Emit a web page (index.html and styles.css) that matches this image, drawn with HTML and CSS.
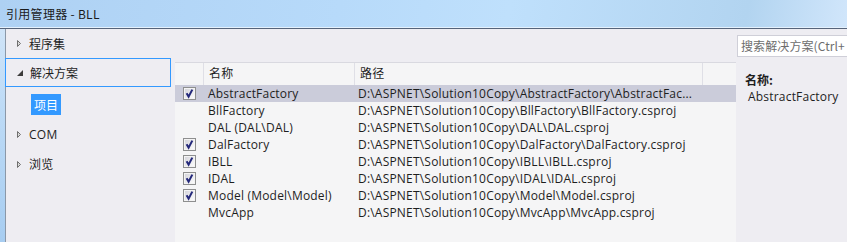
FILE: index.html
```html
<!DOCTYPE html>
<html lang="zh-CN">
<head>
    <meta charset="UTF-8">
    <title>引用管理器 - BLL</title>
    <link rel="stylesheet" href="styles.css">
</head>
<body>
    <div class="window">
        <div class="titlebar">引用管理器 - BLL</div>
        <div class="frame">
            <div class="frame-edge"></div>

            <!-- 左侧导航 -->
            <div class="nav">
                <div class="nav-item">
                    <svg class="arrow" width="6" height="9" viewBox="0 0 6 9"><path d="M1.5 1.5 L4.5 4.5 L1.5 7.5 Z" fill="#d8d8d8" stroke="#6f6f6f" stroke-width="1"/></svg>
                    <span>程序集</span>
                </div>
                <div class="nav-item selected">
                    <svg class="arrow" width="7" height="9" viewBox="0 0 7 9"><path d="M6 2 L6 8 L0 8 Z" fill="#3c3c3c"/></svg>
                    <span>解决方案</span>
                </div>
                <div class="nav-child"><span class="child-active">项目</span></div>
                <div class="nav-item tall">
                    <svg class="arrow" width="6" height="9" viewBox="0 0 6 9"><path d="M1.5 1.5 L4.5 4.5 L1.5 7.5 Z" fill="#d8d8d8" stroke="#6f6f6f" stroke-width="1"/></svg>
                    <span>COM</span>
                </div>
                <div class="nav-item tall">
                    <svg class="arrow" width="6" height="9" viewBox="0 0 6 9"><path d="M1.5 1.5 L4.5 4.5 L1.5 7.5 Z" fill="#d8d8d8" stroke="#6f6f6f" stroke-width="1"/></svg>
                    <span>浏览</span>
                </div>
            </div>

            <!-- 项目列表 -->
            <div class="list">
                <div class="list-head">
                    <div class="col-check"></div>
                    <div class="col-name">名称</div>
                    <div class="col-path">路径</div>
                    <div class="col-rest"></div>
                </div>
                <div class="rows" id="rows"></div>
            </div>

            <!-- 右侧 -->
            <div class="side">
                <div class="search">搜索解决方案(Ctrl+</div>
                <div class="info-label">名称:</div>
                <div class="info-value">AbstractFactory</div>
            </div>
        </div>
    </div>

    <script>
        const projects = [
            { name: 'AbstractFactory', path: 'D:\\ASPNET\\Solution10Copy\\AbstractFactory\\AbstractFac...', checked: true, selected: true },
            { name: 'BllFactory', path: 'D:\\ASPNET\\Solution10Copy\\BllFactory\\BllFactory.csproj', checked: false },
            { name: 'DAL (DAL\\DAL)', path: 'D:\\ASPNET\\Solution10Copy\\DAL\\DAL.csproj', checked: false },
            { name: 'DalFactory', path: 'D:\\ASPNET\\Solution10Copy\\DalFactory\\DalFactory.csproj', checked: true },
            { name: 'IBLL', path: 'D:\\ASPNET\\Solution10Copy\\IBLL\\IBLL.csproj', checked: true },
            { name: 'IDAL', path: 'D:\\ASPNET\\Solution10Copy\\IDAL\\IDAL.csproj', checked: true },
            { name: 'Model (Model\\Model)', path: 'D:\\ASPNET\\Solution10Copy\\Model\\Model.csproj', checked: true },
            { name: 'MvcApp', path: 'D:\\ASPNET\\Solution10Copy\\MvcApp\\MvcApp.csproj', checked: false }
        ];

        const checkSvg = `<svg class="check" width="13" height="13" viewBox="0 0 13 13">
            <defs><linearGradient id="cb" x1="0" y1="0" x2="1" y2="1">
                <stop offset="0" stop-color="#d6d6dc"/><stop offset="1" stop-color="#fbfbfb"/></linearGradient></defs>
            <rect x="0.5" y="0.5" width="12" height="12" fill="#f4f4f4" stroke="#8e8f8f"/>
            <rect x="2" y="2" width="9" height="9" fill="url(#cb)"/>
            <path d="M3.6 6.2 L5.6 9.6 L9.3 2.6" fill="none" stroke="#23287a" stroke-width="2"/>
        </svg>`;

        const rowsDiv = document.getElementById('rows');
        projects.forEach(p => {
            const row = document.createElement('div');
            row.className = 'row' + (p.selected ? ' selected' : '');
            row.innerHTML = `
                <div class="col-check">${p.checked ? checkSvg : ''}</div>
                <div class="col-name">${p.name}</div>
                <div class="col-path">${p.path}</div>`;
            rowsDiv.appendChild(row);
        });
    </script>
</body>
</html>
```

FILE: styles.css
```css
body {
    margin: 0;
    font-family: "Open Sans", "Noto Sans CJK SC", sans-serif;
    font-size: 12px;
    color: #1e1e1e;
    overflow: hidden;
}

.window {
    width: 847px;
    height: 242px;
    display: flex;
    flex-direction: column;
}

.titlebar {
    height: 27px;
    line-height: 28px;
    padding-left: 6px;
    color: #1b1b1b;
    font-family: "Noto Sans CJK SC", sans-serif;
    letter-spacing: 0.3px;
    background: linear-gradient(100deg, #aed1f3 0%, #b7dafa 40%, #bfe0fc 60%, #b2d4f0 88%, #d1e6fb 100%);
    border-bottom: 1px solid #e4f1fd;
    box-shadow: 0 1px 0 #56647a;
    flex-shrink: 0;
}

.frame {
    flex: 1;
    display: flex;
    margin-top: 1px;
    background: #eeedf2;
}

.frame-edge {
    width: 5px;
    background: linear-gradient(180deg, #cfe4f8 0%, #bcdaf6 40%, #a7cdf1 100%);
    border-right: 1px solid #8b98a8;
    flex-shrink: 0;
}

/* Left nav */
.nav {
    width: 169px;
    flex-shrink: 0;
    font-family: "Noto Sans CJK SC", sans-serif;
}

.nav-item {
    height: 29px;
    display: flex;
    align-items: center;
}

.nav-item .arrow {
    margin-left: 10px;
    margin-right: 7px;
}

.nav-item.selected {
    height: 27px;
    margin-left: -1px;
    width: 164px;
    border: 1px solid #3399ff;
}

.nav-item.selected .arrow {
    margin-left: 11px;
    margin-right: 6px;
}

.nav-child {
    height: 21px;
    margin-top: 7px;
    margin-bottom: 4px;
    display: flex;
}

.child-active {
    margin-left: 25px;
    padding: 0 3px;
    background: #3399ff;
    color: #ffffff;
    line-height: 21px;
}

.nav-item.tall {
    height: 30px;
}

.nav-item.tall span {
    font-family: "Open Sans", "Noto Sans CJK SC", sans-serif;
    letter-spacing: 0.3px;
}

/* Project list */
.list {
    width: 561px;
    flex-shrink: 0;
    margin-top: 33px;
    background: #f5f5f6;
}

.list-head {
    height: 22px;
    display: flex;
    border-top: 1px solid #d9d9e0;
    line-height: 22px;
}

.list-head > div {
    border-right: 1px solid #dfdfe6;
}

.list-head .col-rest {
    width: 29px;
    border-right: none;
}

.col-check {
    width: 27px;
    flex-shrink: 0;
    display: flex;
    align-items: center;
    justify-content: center;
    padding-left: 1px;
}

.col-name {
    width: 143px;
    flex-shrink: 0;
    padding-left: 5px;
    white-space: nowrap;
    letter-spacing: 0.2px;
}

.list-head .col-name {
    width: 145px;
}

.col-path {
    width: 344px;
    flex-shrink: 0;
    padding-left: 7px;
    white-space: nowrap;
    letter-spacing: 0.2px;
}

.list-head .col-path {
    width: 342px;
    padding-left: 5px;
}

.row {
    height: 17px;
    display: flex;
    line-height: 17px;
}

.row.selected {
    background: #cbccda;
}

.check {
    display: block;
}

/* Right side */
.side {
    flex: 1;
    padding-top: 6px;
    padding-left: 1px;
}

.search {
    height: 20px;
    line-height: 20px;
    background: #ffffff;
    border: 1px solid #cfcfd8;
    border-right: none;
    padding-left: 3px;
    color: #6d6d6d;
    white-space: nowrap;
    overflow: hidden;
    font-family: "Noto Sans CJK SC", sans-serif;
    letter-spacing: 0.1px;
}

.info-label {
    margin-top: 14px;
    padding-left: 8px;
    font-weight: bold;
    font-family: "Noto Sans CJK SC", sans-serif;
    line-height: 17px;
}

.info-value {
    padding-left: 11px;
    line-height: 17px;
    letter-spacing: 0.2px;
}
```
